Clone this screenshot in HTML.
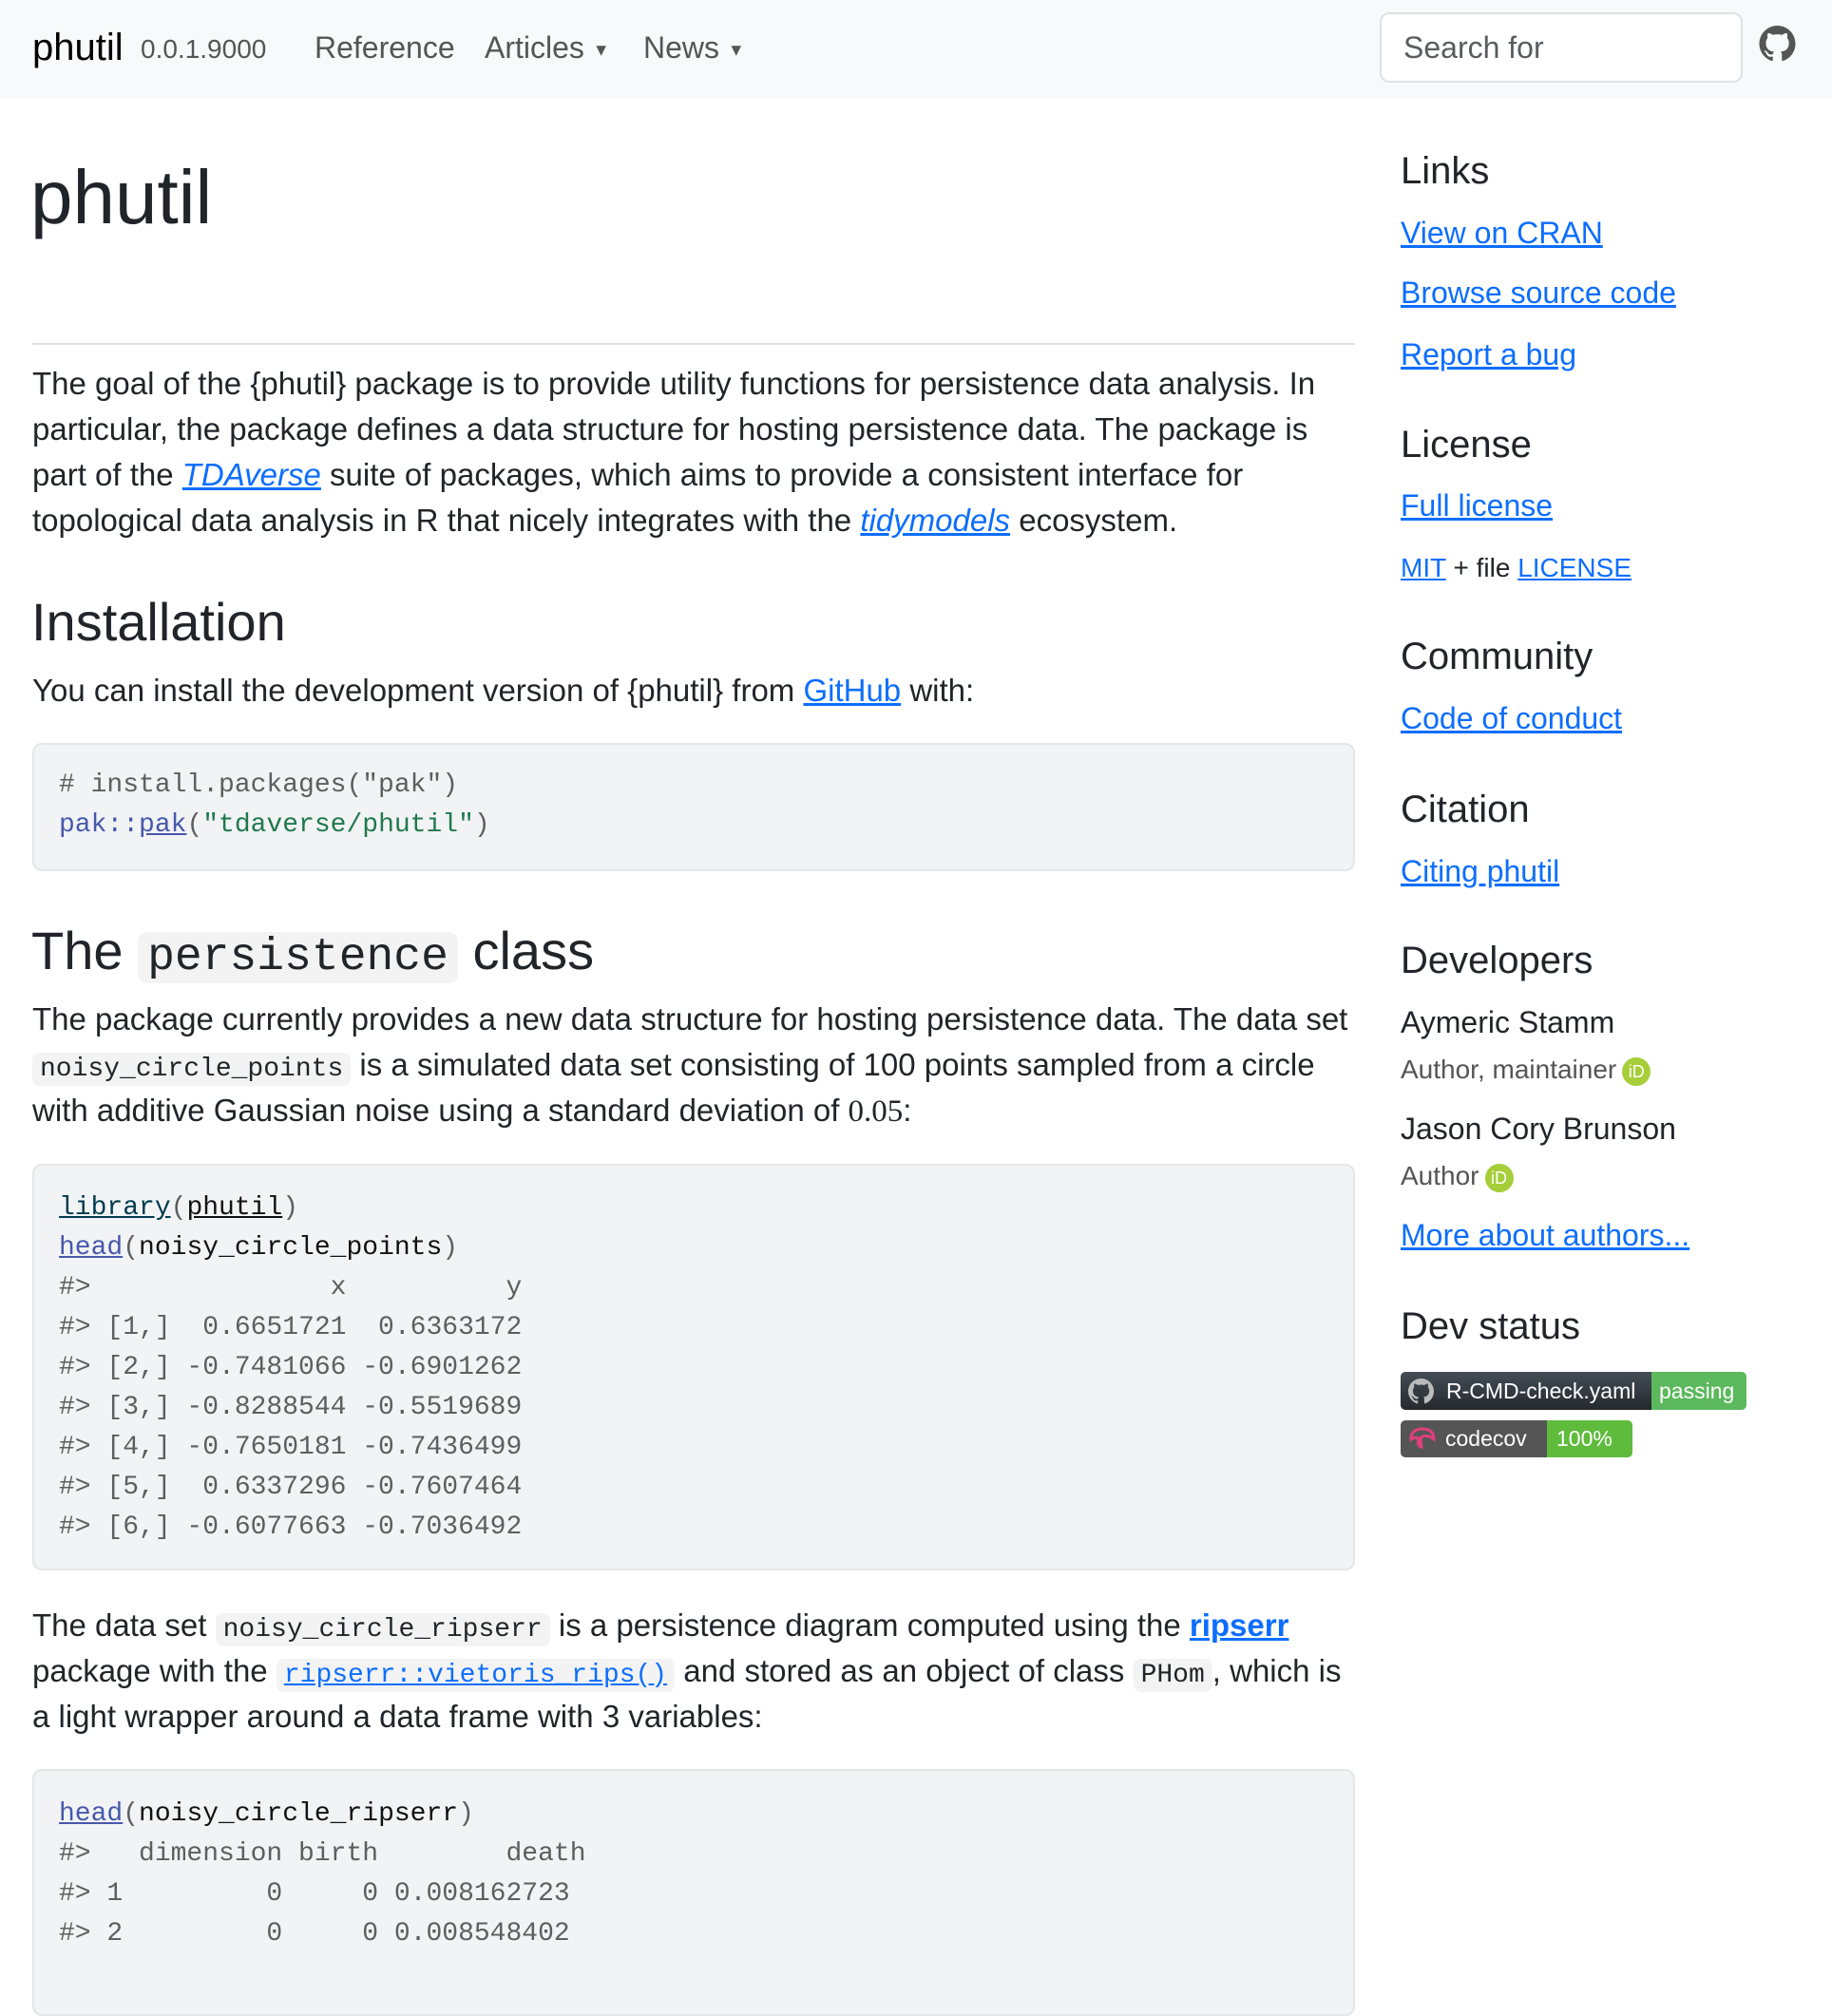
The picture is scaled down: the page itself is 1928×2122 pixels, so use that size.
<!DOCTYPE html>
<html><head><meta charset="utf-8">
<style>
*{margin:0;padding:0;box-sizing:border-box}
body{width:1928px;height:2065px;overflow:hidden;background:#fff;font-family:"Liberation Sans",sans-serif;color:#212529;position:relative}
.a{position:absolute;white-space:nowrap}
.nav{position:absolute;left:0;top:0;width:1928px;height:104px;background:#f8f9fa}
.t{font-size:32px;line-height:48px}
.m{font-size:33px}
a{color:#0d6efd;text-decoration:underline}
.mono{font-family:"Liberation Mono",monospace}
.ic{font-family:"Liberation Mono",monospace;font-size:28px;background:#f3f3f3;border-radius:8px;padding:2px 8px}
.code{position:absolute;left:34px;width:1392px;background:#f1f3f5;border:2px solid #e4e6e8;border-radius:10px}
.cl{position:absolute;left:26px;font-family:"Liberation Mono",monospace;font-size:28px;line-height:42px;white-space:pre;color:#5e5e5e}
.side{font-size:40px;line-height:48px;font-weight:500}
.dk{color:#111}
.fn{color:#4758ab;text-decoration:underline}
.lib{color:#003b4f;text-decoration:underline}
.str{color:#20794d}
.orc{display:inline-block;width:30px;height:30px;border-radius:50%;background:#a6ce39;color:#fff;font-size:18px;line-height:30px;text-align:center;vertical-align:middle;margin-left:6px}
</style></head><body>
<div class="nav"></div>
<div class="a" style="left:34px;top:26px;font-size:40px;line-height:48px;color:#000">phutil</div>
<div class="a" style="left:148px;top:32px;font-size:28px;line-height:40px;color:#555">0.0.1.9000</div>
<div class="a" style="left:331px;top:26px;font-size:32px;line-height:48px;color:#555">Reference</div>
<div class="a" style="left:510px;top:26px;font-size:32px;line-height:48px;color:#555">Articles <span style="font-size:18px;vertical-align:middle">▼</span></div>
<div class="a" style="left:677px;top:26px;font-size:32px;line-height:48px;color:#555">News <span style="font-size:18px;vertical-align:middle">▼</span></div>
<div class="a" style="left:1452px;top:13px;width:382px;height:74px;background:#fff;border:2px solid #dee2e6;border-radius:10px"></div>
<div class="a" style="left:1477px;top:26px;font-size:32px;line-height:48px;color:#595c5f">Search for</div>
<svg class="a" style="left:1851px;top:27px" width="39" height="38" viewBox="0 0 16 16"><path fill="#555" d="M8 0C3.58 0 0 3.58 0 8c0 3.54 2.290 6.53 5.47 7.59.4.07.55-.17.55-.38 0-.19-.01-.82-.01-1.49-2.01.37-2.53-.49-2.690-.94-.09-.23-.48-.94-.82-1.13-.28-.15-.68-.52-.01-.53.63-.01 1.08.58 1.23.82.72 1.21 1.87.87 2.33.66.07-.52.28-.87.51-1.07-1.78-.2-3.64-.89-3.64-3.95 0-.87.31-1.59.82-2.15-.08-.2-.36-1.02.08-2.12 0 0 .67-.21 2.2.82.64-.18 1.32-.27 2-.27.68 0 1.36.09 2 .27 1.53-1.04 2.2-.82 2.2-.82.44 1.1.16 1.92.08 2.12.51.56.82 1.27.82 2.15 0 3.07-1.87 3.75-3.65 3.95.29.25.54.73.54 1.48 0 1.07-.01 1.93-.01 2.2 0 .21.15.46.55.38A8.013 8.013 0 0016 8c0-4.42-3.58-8-8-8z"/></svg>

<div class="a" style="left:32px;top:160px;font-size:80px;line-height:96px;font-weight:500">phutil</div>
<div class="a" style="left:34px;top:361px;width:1392px;height:2px;background:#dee2e6"></div>

<div class="a t m" style="left:34px;top:380px">The goal of the {phutil} package is to provide utility functions for persistence data analysis. In</div>
<div class="a t m" style="left:34px;top:428px">particular, the package defines a data structure for hosting persistence data. The package is</div>
<div class="a t m" style="left:34px;top:476px">part of the <a><i>TDAverse</i></a> suite of packages, which aims to provide a consistent interface for</div>
<div class="a t m" style="left:34px;top:524px">topological data analysis in R that nicely integrates with the <a><i>tidymodels</i></a> ecosystem.</div>

<div class="a" style="left:33px;top:621px;font-size:56px;line-height:68px;font-weight:500">Installation</div>
<div class="a t m" style="left:34px;top:703px">You can install the development version of {phutil} from <a>GitHub</a> with:</div>

<div class="code" style="top:782px;height:135px">
<div class="cl" style="top:22px"># install.packages("pak")</div>
<div class="cl" style="top:64px"><span class="fn" style="text-decoration:none">pak::</span><span class="fn">pak</span>(<span class="str">"tdaverse/phutil"</span>)</div>
</div>

<div class="a" style="left:33px;top:967px;font-size:56px;line-height:68px;font-weight:500">The <span class="mono" style="background:#f3f3f3;border-radius:10px;padding:0 10px;font-size:48px;font-weight:400">persistence</span> class</div>
<div class="a t m" style="left:34px;top:1049px">The package currently provides a new data structure for hosting persistence data. The data set</div>
<div class="a t m" style="left:34px;top:1097px"><span class="ic">noisy_circle_points</span> is a simulated data set consisting of 100 points sampled from a circle</div>
<div class="a t m" style="left:34px;top:1145px">with additive Gaussian noise using a standard deviation of <span style="font-family:'Liberation Serif',serif">0.05</span>:</div>

<div class="code" style="top:1225px;height:428px">
<div class="cl" style="top:24px"><span class="lib">library</span>(<span class="dk" style="text-decoration:underline">phutil</span>)</div>
<div class="cl" style="top:66px"><span class="fn">head</span>(<span class="dk">noisy_circle_points</span>)</div>
<div class="cl" style="top:108px">#&gt;               x          y</div>
<div class="cl" style="top:150px">#&gt; [1,]  0.6651721  0.6363172</div>
<div class="cl" style="top:192px">#&gt; [2,] -0.7481066 -0.6901262</div>
<div class="cl" style="top:234px">#&gt; [3,] -0.8288544 -0.5519689</div>
<div class="cl" style="top:276px">#&gt; [4,] -0.7650181 -0.7436499</div>
<div class="cl" style="top:318px">#&gt; [5,]  0.6337296 -0.7607464</div>
<div class="cl" style="top:360px">#&gt; [6,] -0.6077663 -0.7036492</div>
</div>

<div class="a t m" style="left:34px;top:1687px">The data set <span class="ic">noisy_circle_ripserr</span> is a persistence diagram computed using the <a><b>ripserr</b></a></div>
<div class="a t m" style="left:34px;top:1735px">package with the <a class="ic" style="color:#0d6efd">ripserr::vietoris_rips()</a> and stored as an object of class <span class="ic">PHom</span>, which is</div>
<div class="a t m" style="left:34px;top:1783px">a light wrapper around a data frame with 3 variables:</div>

<div class="code" style="top:1862px;height:260px">
<div class="cl" style="top:25px"><span class="fn">head</span>(<span class="dk">noisy_circle_ripserr</span>)</div>
<div class="cl" style="top:67px">#&gt;   dimension birth        death</div>
<div class="cl" style="top:109px">#&gt; 1         0     0 0.008162723</div>
<div class="cl" style="top:151px">#&gt; 2         0     0 0.008548402</div>
</div>

<!-- sidebar -->
<div class="a side" style="left:1474px;top:156px">Links</div>
<div class="a t" style="left:1474px;top:221px"><a>View on CRAN</a></div>
<div class="a t" style="left:1474px;top:284px"><a>Browse source code</a></div>
<div class="a t" style="left:1474px;top:349px"><a>Report a bug</a></div>
<div class="a side" style="left:1474px;top:444px">License</div>
<div class="a t" style="left:1474px;top:508px"><a>Full license</a></div>
<div class="a" style="left:1474px;top:578px;font-size:28px;line-height:40px"><a>MIT</a> + file <a>LICENSE</a></div>
<div class="a side" style="left:1474px;top:667px">Community</div>
<div class="a t" style="left:1474px;top:732px"><a>Code of conduct</a></div>
<div class="a side" style="left:1474px;top:828px">Citation</div>
<div class="a t" style="left:1474px;top:893px"><a>Citing phutil</a></div>
<div class="a side" style="left:1474px;top:987px">Developers</div>
<div class="a t" style="left:1474px;top:1052px">Aymeric Stamm</div>
<div class="a" style="left:1474px;top:1106px;font-size:28px;line-height:40px;color:#555">Author, maintainer<span class="orc">iD</span></div>
<div class="a t" style="left:1474px;top:1164px">Jason Cory Brunson</div>
<div class="a" style="left:1474px;top:1218px;font-size:28px;line-height:40px;color:#555">Author<span class="orc">iD</span></div>
<div class="a t" style="left:1474px;top:1276px"><a>More about authors...</a></div>
<div class="a side" style="left:1474px;top:1372px">Dev status</div>

<div class="a" style="left:1474px;top:1444px;width:364px;height:40px;border-radius:5px;overflow:hidden;display:flex;font-size:23px;line-height:40px;color:#fff">
<div style="width:264px;background:linear-gradient(#444d56,#24292e);padding-left:48px;position:relative">R-CMD-check.yaml
<svg style="position:absolute;left:8px;top:7px" width="27" height="27" viewBox="0 0 16 16"><path fill="#bbb" d="M8 0C3.58 0 0 3.58 0 8c0 3.54 2.29 6.53 5.47 7.59.4.07.55-.17.55-.38v-1.49c-2.01.37-2.53-.49-2.69-.94-.09-.23-.48-.94-.82-1.130-.28-.15-.68-.52-.01-.53.63-.01 1.08.58 1.23.82.72 1.21 1.87.87 2.33.66.07-.52.28-.87.51-1.07-1.78-.2-3.64-.89-3.64-3.95 0-.87.31-1.59.82-2.15-.08-.2-.36-1.02.08-2.12 0 0 .67-.21 2.2.82.64-.18 1.32-.27 2-.27s1.36.09 2 .27c1.53-1.04 2.2-.82 2.2-.82.44 1.1.16 1.92.08 2.12.51.56.82 1.27.82 2.15 0 3.07-1.87 3.75-3.65 3.95.29.25.54.73.54 1.48v2.2c0 .21.15.46.55.38A8.013 8.013 0 0016 8c0-4.42-3.58-8-8-8z"/></svg></div>
<div style="flex:1;background:#5cb85c;padding-left:8px">passing</div>
</div>
<div class="a" style="left:1474px;top:1495px;width:244px;height:39px;border-radius:5px;overflow:hidden;display:flex;font-size:23px;line-height:39px;color:#fff">
<div style="width:154px;background:#555;padding-left:47px;position:relative">codecov
<svg style="position:absolute;left:8px;top:6px" width="30" height="28" viewBox="0 0 30 28"><path d="M3 14 Q3 3 15 3 Q27 3 27 14 Q21 9 15 11 Q12 12 14 22 Q9 21 11 13 Q7 11 3 14Z" fill="none" stroke="#e0407b" stroke-width="3"/></svg></div>
<div style="flex:1;background:#5fbb3c;padding-left:10px">100%</div>
</div>
</body></html>
